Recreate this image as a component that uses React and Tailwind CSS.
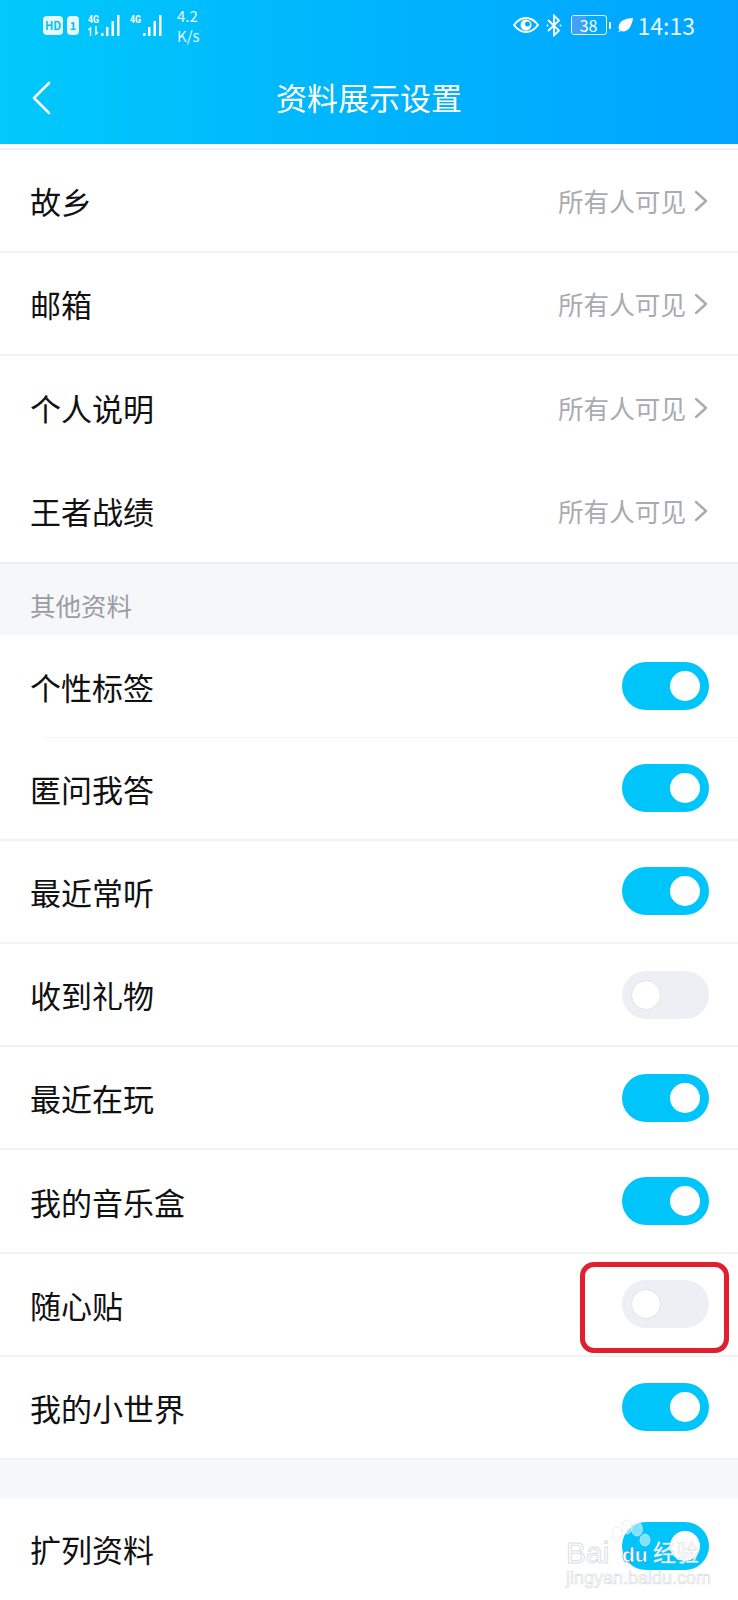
const visibleRows = [
  { label: '故乡', line: true },
  { label: '邮箱', line: true },
  { label: '个人说明', line: false },
  { label: '王者战绩', line: false },
];

const toggleRows = [
  { label: '个性标签', on: true, faint: true },
  { label: '匿问我答', on: true },
  { label: '最近常听', on: true },
  { label: '收到礼物', on: false },
  { label: '最近在玩', on: true },
  { label: '我的音乐盒', on: true },
  { label: '随心贴', on: false, marked: true },
  { label: '我的小世界', on: true },
];

function Toggle({ on }) {
  if (on) {
    return (
      <div className="flex h-[48px] w-[87px] items-center justify-end rounded-full bg-[#00c5fb] pr-[9px]">
        <div className="h-[30px] w-[30px] rounded-full bg-white" />
      </div>
    );
  }
  return (
    <div className="flex h-[48px] w-[87px] items-center justify-start rounded-full bg-[#eeeff5] pl-[9px]">
      <div className="h-[30px] w-[30px] rounded-full border border-[#e3e3e6] bg-white" />
    </div>
  );
}

function Signal({ arrows }) {
  return (
    <svg width="35" height="24" viewBox="0 0 35 24" fill="white">
      <text x="0" y="10" fontSize="10.500" fontWeight="700" fontFamily="Roboto, sans-serif" textLength="11" lengthAdjust="spacingAndGlyphs">4G</text>
      {arrows && <path d="M2.500 23v-8l-2 2M8 13v8l2-2" stroke="white" strokeWidth="1.400" fill="none" />}
      <rect x="13" y="20" width="2.500" height="3" />
      <rect x="18" y="14" width="2.500" height="9" />
      <rect x="23.500" y="8" width="2.500" height="15" />
      <rect x="29" y="2" width="2.500" height="21" />
    </svg>
  );
}

function StatusBar() {
  return (
    <div className="flex h-[50px] items-center justify-between pl-[43px] pr-[43px] text-white">
      <div className="flex items-center">
        <div className="flex h-[19px] w-[20px] items-center justify-center rounded-[4px] bg-white/90 text-[11px] font-bold text-[#00c0fb]">HD</div>
        <div className="ml-[4px] flex h-[19px] w-[12px] items-center justify-center rounded-[4px] bg-white/90 text-[11px] font-bold text-[#00c0fb]">1</div>
        <div className="ml-[9px]"><Signal arrows /></div>
        <div className="ml-[7px]"><Signal /></div>
        <div className="ml-[12px] flex flex-col items-start pt-[1px] text-[15px] leading-[20px] opacity-90">
          <span>4.2</span>
          <span>K/s</span>
        </div>
      </div>
      <div className="flex items-center">
        <svg width="26" height="16" viewBox="0 0 26 16" fill="none">
          <path d="M1 8C5 2.500 9 1 13 1s8 1.500 12 7c-4 5.500-8 7-12 7S5 13.500 1 8z" stroke="white" strokeWidth="2" />
          <circle cx="13" cy="8" r="5.500" fill="white" />
          <circle cx="14.500" cy="7" r="2.500" fill="#00aeff" />
        </svg>
        <svg className="ml-[7px]" width="16" height="23" viewBox="0 0 16 23" fill="none" stroke="white" strokeWidth="1.800">
          <path d="M2 6l11 10.500L8 21.500V1.500l5 5L2 17" />
          <circle cx="1.500" cy="11.500" r="1" fill="white" stroke="none" />
          <circle cx="14.500" cy="11.500" r="1" fill="white" stroke="none" />
        </svg>
        <div className="relative ml-[9px] flex h-[20px] w-[36px] items-center justify-center rounded-[3px] border border-white/90 text-[16px] leading-none">
          <div className="absolute inset-y-0 left-0 w-[14px] bg-[#5d9df0]/70" />
          <span className="relative">38</span>
        </div>
        <div className="ml-[2px] h-[7px] w-[2px] rounded-full bg-white" />
        <svg className="ml-[7px]" width="15" height="14" viewBox="0 0 15 14" fill="white">
          <path d="M15 0C8 .500 2 2 .800 8c-.400 2 0 3.500 1 4.500L0 14h1.500l1.300-1.200C5 14 9 13.500 11.500 10 13.500 7.200 14.500 3.500 15 0z" />
        </svg>
        <span className="ml-[5px] text-[23px] leading-none opacity-90">14:13</span>
      </div>
    </div>
  );
}

function Header() {
  return (
    <div className="h-[144px] bg-gradient-to-r from-[#00c9fb] via-[#00b4fd] to-[#00a4ff]">
      <StatusBar />
      <div className="relative flex h-[94px] items-center justify-center pb-[2px] text-white">
        <svg className="absolute left-[31px] top-[31px]" width="20" height="34" viewBox="0 0 20 34" fill="none" stroke="white" strokeWidth="2.600" strokeLinecap="round" strokeLinejoin="round">
          <path d="M18 2L3 17l15 15" />
        </svg>
        <span className="text-[31px] leading-none">资料展示设置</span>
      </div>
    </div>
  );
}

function Watermark() {
  return (
    <div className="absolute left-[566px] top-[1518px] h-[70px] w-[140px] font-['Liberation_Sans',sans-serif] leading-none">
      <svg className="absolute left-[44px] top-[1px]" width="46" height="44" viewBox="0 0 46 44" fill="#ffffff" fillOpacity="0.5" stroke="#e2e5e9" strokeWidth="0.700">
        <ellipse cx="7" cy="15" rx="5" ry="7" />
        <ellipse cx="17" cy="8" rx="5" ry="7" />
        <ellipse cx="27" cy="10" rx="5.500" ry="7" />
        <ellipse cx="35" cy="21" rx="5" ry="6" />
      </svg>
      <span className="absolute left-0 top-[20px] text-[30px] text-white [-webkit-text-stroke:1px_#dcdfe3]">Bai</span>
      <span className="absolute left-[56px] top-[26px] text-[21px] font-bold text-white [-webkit-text-stroke:0.5px_#1a86cc]">du</span>
      <span className="absolute left-[87px] top-[22px] font-['Noto_Sans_CJK_SC',sans-serif] text-[23px] text-white [-webkit-text-stroke:0.4px_#d5d8dc]">经验</span>
      <span className="absolute left-0 top-[51px] whitespace-nowrap text-[18px] text-white [-webkit-text-stroke:0.6px_#d5d8dc]">jingyan.baidu.com</span>
    </div>
  );
}

export default function App() {
  return (
    <div className="relative h-[1600px] w-[738px] overflow-hidden bg-white font-['Noto_Sans_CJK_SC','Noto_Sans',sans-serif]">
      <Header />
      <div className="h-[6px] border-b-2 border-[#f1f2f5]" />

      {visibleRows.map((row) => (
        <div key={row.label} className={`flex h-[103px] items-center justify-between pl-[30px] pr-[30px] ${row.line ? 'border-b-2 border-[#f1f2f5]' : ''}`}>
          <span className="text-[31px] leading-none text-[#111]">{row.label}</span>
          <div className="flex items-center text-[#a9abb0]">
            <span className="text-[25.600px] leading-none">所有人可见</span>
            <svg className="ml-[8px]" width="14" height="22" viewBox="0 0 14 22" fill="none" stroke="#a9abb0" strokeWidth="2.400" strokeLinecap="round" strokeLinejoin="round">
              <path d="M2 2l10 9-10 9" />
            </svg>
          </div>
        </div>
      ))}

      <div className="flex h-[72.500px] items-center border-t-2 border-[#eeeff2] bg-[#f6f7f9] pl-[30px] pt-[10px]">
        <span className="text-[25.500px] leading-none text-[#9a9ca3]">其他资料</span>
      </div>

      {toggleRows.map((row) => (
        <div key={row.label} className={`relative flex h-[103.200px] items-center justify-between pl-[30px] pr-[29px] last:h-[103px] ${row.faint ? '' : 'border-b-2 border-[#f1f2f5]'}`}>
          <span className="text-[31px] leading-none text-[#111]">{row.label}</span>
          <Toggle on={row.on} />
          {row.faint && <div className="absolute bottom-0 left-[44px] right-0 h-[1px] bg-[#f4f4f6]" />}
          {row.marked && (
            <div className="absolute left-[580px] top-[8px] h-[91px] w-[149px] rounded-[14px] border-[5px] border-[#e0202e]" />
          )}
        </div>
      ))}

      <div className="h-[38px] bg-[#f6f7f9]" />

      <div className="flex h-[96px] items-center justify-between pl-[30px] pr-[29px]">
        <span className="mt-[4px] text-[31px] leading-none text-[#111]">扩列资料</span>
        <Toggle on />
      </div>
      <Watermark />
    </div>
  );
}
